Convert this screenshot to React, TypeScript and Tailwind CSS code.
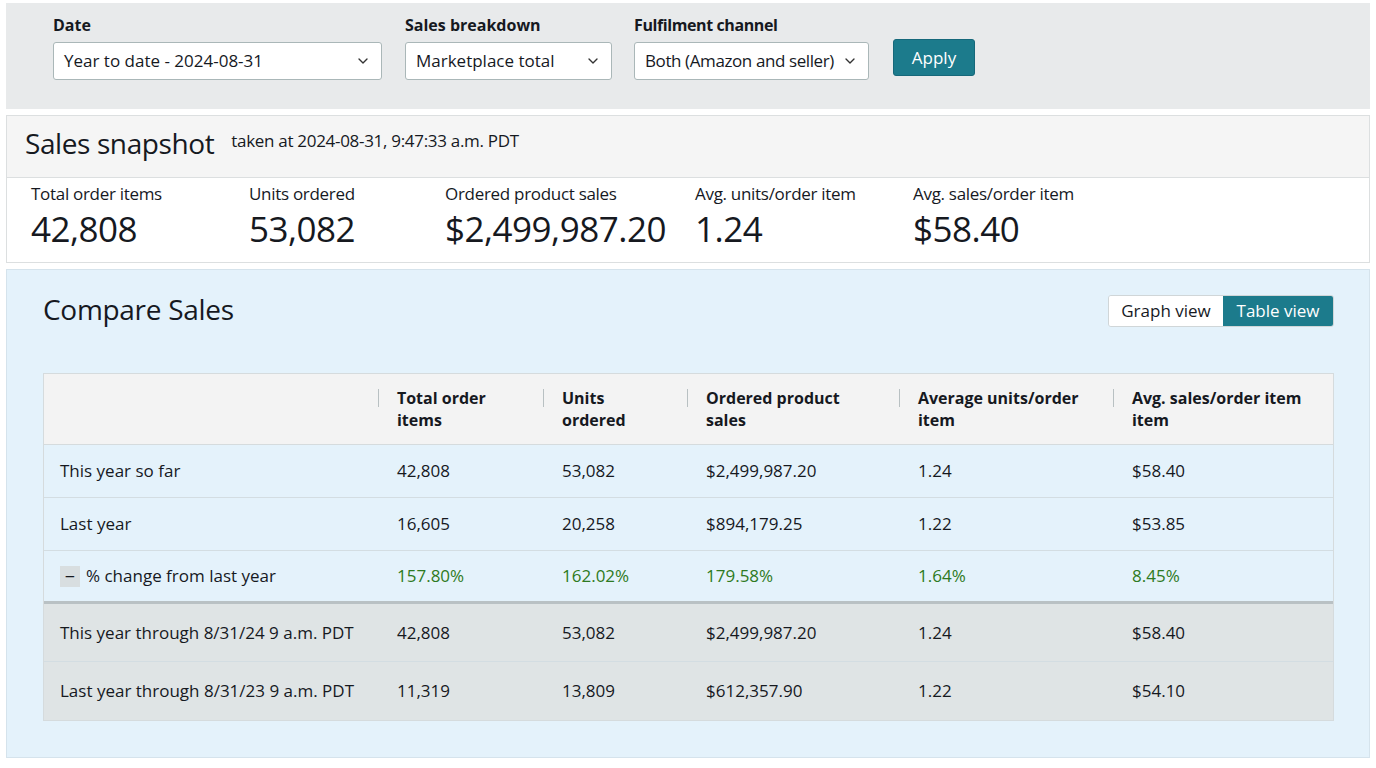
import { ChevronDown } from 'lucide-react'

const font = "font-['Open_Sans',sans-serif]"

type Row = {
  label: string
  values: string[]
  tone?: 'plain' | 'change' | 'shaded'
}

const rows: Row[] = [
  { label: 'This year so far', values: ['42,808', '53,082', '$2,499,987.20', '1.24', '$58.40'] },
  { label: 'Last year', values: ['16,605', '20,258', '$894,179.25', '1.22', '$53.85'] },
  { label: '% change from last year', values: ['157.80%', '162.02%', '179.58%', '1.64%', '8.45%'], tone: 'change' },
  { label: 'This year through 8/31/24 9 a.m. PDT', values: ['42,808', '53,082', '$2,499,987.20', '1.24', '$58.40'], tone: 'shaded' },
  { label: 'Last year through 8/31/23 9 a.m. PDT', values: ['11,319', '13,809', '$612,357.90', '1.22', '$54.10'], tone: 'shaded' },
]

const headers = ['Total order items', 'Units ordered', 'Ordered product sales', 'Average units/order item', 'Avg. sales/order item item']

const metrics = [
  { label: 'Total order items', value: '42,808', w: 'w-[218px]' },
  { label: 'Units ordered', value: '53,082', w: 'w-[196px]' },
  { label: 'Ordered product sales', value: '$2,499,987.20', w: 'w-[250px]' },
  { label: 'Avg. units/order item', value: '1.24', w: 'w-[218px]' },
  { label: 'Avg. sales/order item', value: '$58.40', w: 'w-[200px]' },
]

const cols = 'grid grid-cols-[334px_165px_144px_212px_214px_1fr]'

function Select({ label, value, width }: { label: string; value: string; width: string }) {
  return (
    <div className={`flex flex-col ${width}`}>
      <span className="text-[16px] font-bold leading-[22px] text-[#16191f]">{label}</span>
      <div className="mt-[6px] flex h-[38px] items-center justify-between whitespace-nowrap rounded-[3px] border border-[#aab7b8] bg-white pl-[10px] pr-[10px] text-[17px] text-[#16191f]">
        <span>{value}</span>
        <ChevronDown className="ml-[6px] h-4 w-4 shrink-0 text-[#333]" strokeWidth={2} />
      </div>
    </div>
  )
}

export default function App() {
  return (
    <div className={`min-h-screen bg-white px-[6px] pt-[3px] ${font} text-[#16191f]`}>
      {/* filters */}
      <div className="flex h-[106px] items-start bg-[#e8eaeb] pl-[47px] pt-[11px]">
        <Select label="Date" value="Year to date - 2024-08-31" width="w-[329px]" />
        <div className="w-[23px]" />
        <Select label="Sales breakdown" value="Marketplace total" width="w-[207px]" />
        <div className="w-[22px]" />
        <div className="tracking-[-0.4px]">
          <Select label="Fulfilment channel" value="Both (Amazon and seller)" width="w-[235px]" />
        </div>
        <button className="ml-[24px] mt-[25px] h-[37px] w-[82px] rounded-[3px] border border-[#16687a] bg-[#1c7b8c] text-[17px] text-white">
          Apply
        </button>
      </div>

      {/* snapshot */}
      <div className="mt-[6px] border border-[#dcdfe0]">
        <div className="flex h-[62px] items-center border-b border-[#dcdfe0] bg-[#f5f5f5] pl-[18px]">
          <span className="mb-[8px] text-[28px] leading-none tracking-[-0.4px]">Sales snapshot</span>
          <span className="ml-[17px] mb-[12px] text-[17px] tracking-[-0.3px]">taken at 2024-08-31, 9:47:33 a.m. PDT</span>
        </div>
        <div className="flex h-[84px] bg-white pl-[24px] pt-[6px]">
          {metrics.map((m) => (
            <div key={m.label} className={`flex flex-col ${m.w}`}>
              <span className="text-[17px] leading-[20px] tracking-[-0.3px]">{m.label}</span>
              <span className="mt-[4px] text-[35px] leading-[42px] tracking-[-0.5px]">{m.value}</span>
            </div>
          ))}
        </div>
      </div>

      {/* compare */}
      <div className="mt-[6px] h-[489px] border border-[#d5e3ec] bg-[#e4f2fb] pl-[36px] pr-[35px] pt-[21px]">
        <div className="flex items-start justify-between">
          <h2 className="text-[28px] leading-[36px] tracking-[-0.3px]">Compare Sales</h2>
          <div className="mt-[4px] flex h-[32px] overflow-hidden rounded-[3px] border border-[#d0d6d8] text-[17px]">
            <span className="flex w-[114px] items-center justify-center bg-white">Graph view</span>
            <span className="flex w-[110px] items-center justify-center bg-[#1c7b8c] text-white">Table view</span>
          </div>
        </div>

        <div className="mt-[46px] border border-[#d5dbdd]">
          <div className={`${cols} h-[71px] border-b border-[#d5dbdd] bg-[#f3f3f3] text-[16px] font-bold leading-[22px]`}>
            <div />
            {headers.map((h) => (
              <div key={h} className="flex pt-[13px]">
                <span className="mt-[2px] h-[18px] w-px bg-[#b8c0c2]" />
                <span className="ml-[18px] pr-[16px]">{h}</span>
              </div>
            ))}
          </div>
          {rows.map((r, i) => {
            const shaded = r.tone === 'shaded'
            const border =
              r.tone === 'change'
                ? 'border-b-[3px] border-[#b9c1c4]'
                : i < rows.length - 1
                  ? 'border-b border-[#d3dde2]'
                  : ''
            return (
              <div
                key={r.label}
                className={`${cols} ${shaded ? 'h-[58px] bg-[#dfe4e5]' : 'h-[53px] bg-[#e4f2fb]'} ${border} items-center text-[17px]`}
              >
                <div className="flex items-center pl-[16px]">
                  {r.tone === 'change' && (
                    <span className="mr-[6px] flex h-[21px] w-[20px] items-center justify-center bg-[#d8dee0] text-[18px] leading-none">
                      −
                    </span>
                  )}
                  {r.label}
                </div>
                {r.values.map((v, j) => (
                  <div key={j} className={`pl-[19px] ${r.tone === 'change' ? 'text-[#2e7a22]' : ''}`}>
                    {v}
                  </div>
                ))}
              </div>
            )
          })}
        </div>
      </div>
    </div>
  )
}
